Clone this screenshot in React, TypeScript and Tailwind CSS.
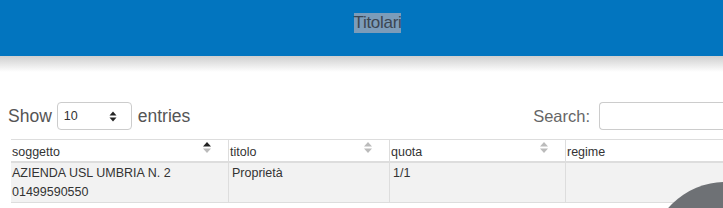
import React from "react";

const SortIcon: React.FC<{ active?: boolean }> = ({ active }) => (
  <svg width="10" height="13" viewBox="0 0 10 13" className="shrink-0">
    <path d="M1 5.5 L5 1 L9 5.5 Z" fill={active ? "#222" : "#bbb"} />
    <path d="M1 7.5 L5 12 L9 7.5 Z" fill="#bbb" />
  </svg>
);

const columns = [
  { name: "soggetto", w: "w-[217px]", active: true },
  { name: "titolo", w: "w-[161px]" },
  { name: "quota", w: "w-[176px]" },
  { name: "regime", w: "w-[186px]", noSort: true },
];

export default function App() {
  return (
    <div className="relative h-[208px] w-[723px] overflow-hidden bg-white font-['Liberation_Sans',Arial,sans-serif]">
      <div className="flex h-14 items-center justify-center bg-[#0275bf]">
        <span className="mb-[10px] ml-[32px] bg-[#7c9cb9] text-[17px] leading-5 tracking-[-0.3px] text-[#3b4652]">Titolari</span>
      </div>
      <div className="h-4 bg-gradient-to-b from-[#cfcfcf] to-white" />

      <div className="mt-[30px] flex items-center justify-between pl-2">
        <div className="flex items-center gap-[5px] text-[17.5px] text-[#555]">
          <span>Show</span>
          <div className="flex h-7 w-[75px] items-center justify-between rounded border border-[#ccc] px-[6px] text-[12.5px] text-[#333]">
            <span>10</span>
            <svg width="8" height="11" viewBox="0 0 8 11" className="mr-2">
              <path d="M0.5 4.5 L4 0.5 L7.5 4.5 Z" fill="#222" />
              <path d="M0.5 6.5 L4 10.5 L7.5 6.5 Z" fill="#222" />
            </svg>
          </div>
          <span className="ml-[1px]">entries</span>
        </div>
        <div className="flex items-center gap-[9px] text-[16.5px] text-[#666]">
          <span>Search:</span>
          <div className="h-7 w-[124px] rounded-l border border-r-0 border-[#ccc]" />
        </div>
      </div>

      <div className="ml-[11px] mt-[9px] w-[740px]">
        <div className="flex border-t border-b-2 border-[#ddd] bg-white text-[12.5px] text-[#333]">
          {columns.map((c, i) => (
            <div
              key={c.name}
              className={`${c.w} flex h-[21px] items-start justify-between pl-[1px] pr-[16px] pt-[3px] ${i > 0 ? "border-l border-[#ddd]" : ""}`}
            >
              <span>{c.name}</span>
              {!c.noSort && <div className="-mt-[2px]"><SortIcon active={c.active} /></div>}
            </div>
          ))}
        </div>
        <div className="flex border-b border-[#ddd] bg-[#f2f2f2] text-[12.5px] leading-[19px] text-[#333]">
          <div className="w-[217px] pl-[1px] pt-[1px]">
            <div>AZIENDA USL UMBRIA N. 2</div>
            <div>01499590550</div>
          </div>
          <div className="w-[161px] border-l border-[#ddd] pl-[3px] pt-[1px]">Proprietà</div>
          <div className="w-[176px] border-l border-[#ddd] pl-[3px] pt-[1px]">1/1</div>
          <div className="w-[186px] border-l border-[#ddd]" />
        </div>
      </div>

      <div className="absolute left-[650px] top-[182px] h-[150px] w-[150px] rounded-full bg-[#6e7175]" />
    </div>
  );
}
